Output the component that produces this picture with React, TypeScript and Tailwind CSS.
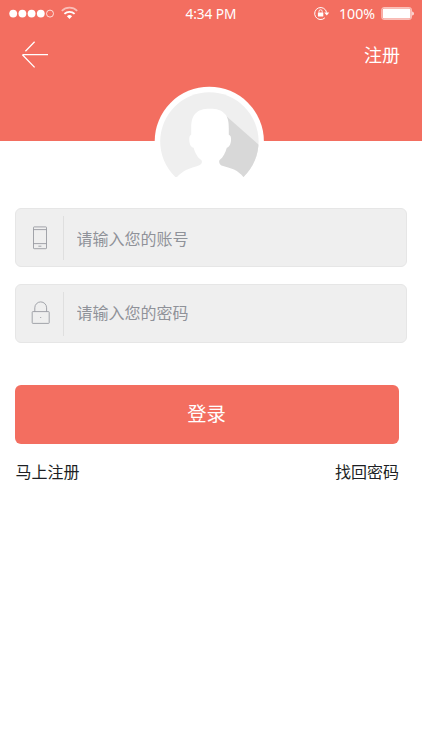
import type { ReactNode } from "react";

function StatusBar() {
	return (
		<div className="flex h-[27px] items-center text-white">
			<svg width="80" height="27" viewBox="0 0 80 27" fill="none">
				<g fill="#fff">
					<circle cx="13.2" cy="13.6" r="3.9" />
					<circle cx="22.4" cy="13.6" r="3.9" />
					<circle cx="31.6" cy="13.6" r="3.9" />
					<circle cx="40.8" cy="13.6" r="3.9" />
				</g>
				<circle cx="50" cy="13.6" r="3.5" stroke="#fff" strokeWidth="0.9" opacity="0.85" />
				<path d="M61.8 10.8a11 11 0 0 1 15.4 0" stroke="#fff" strokeWidth="1.7" opacity="0.55" />
				<path d="M64.4 13.9a7.2 7.2 0 0 1 10.2 0" stroke="#fff" strokeWidth="1.8" />
				<path d="M66.9 16.3a3.8 3.8 0 0 1 5.2 0L69.5 19z" fill="#fff" />
			</svg>
			<span className="ml-[105.5px] w-[51.5px] whitespace-nowrap text-[13.7px] leading-[27px] tracking-[-0.1px]">4:34 PM</span>
			<svg className="ml-[75px]" width="20" height="27" viewBox="312 0 20 27" fill="none">
				<path d="M324.9 17.8a6 6 0 1 1 1.7-5.2" stroke="#fff" strokeWidth="1" />
				<path d="M324.2 12.4h5L326.8 15.6z" fill="#fff" />
				<rect x="317.9" y="12.4" width="5.4" height="4.2" rx="0.4" fill="#fff" />
				<path d="M319 12.6v-1.2a1.6 1.6 0 0 1 3.2 0v1.2" stroke="#fff" strokeWidth="0.9" />
			</svg>
			<span className="ml-[7px] w-[36px] whitespace-nowrap text-[14.2px] leading-[27px]">100%</span>
			<svg className="ml-[6px]" width="34" height="27" viewBox="381 0 34 27" fill="none">
				<rect x="381.8" y="7.6" width="29.6" height="11.8" rx="2" stroke="#fff" strokeWidth="0.8" opacity="0.8" />
				<rect x="382.7" y="8.5" width="27.8" height="10" rx="1.2" fill="#fff" />
				<path d="M412.3 11.4c1.9.6 1.9 3.6 0 4.2z" fill="#fff" />
			</svg>
		</div>
	);
}

function Avatar() {
	return (
		<svg className="relative mx-auto -mt-[55px] -translate-x-[2px]" width="110" height="110" viewBox="0 0 110 110">
			<defs>
				<clipPath id="disc">
					<circle cx="55.4" cy="55.5" r="49.2" />
				</clipPath>
			</defs>
			<circle cx="55.3" cy="55.3" r="54.6" fill="#fff" />
			<g clipPath="url(#disc)">
				<rect width="110" height="110" fill="#efefef" />
				<path d="M73 30.7L110 63.3V110H56V32z" fill="#d8d8d8" />
			</g>
			<path
				d="M56 22.7C63 22.7 67.5 24 71 28C74.5 32 74.8 37 74.8 43V48.8C76.6 49.4 77.3 51 77 54.5C76.7 58.5 75 61.4 72.8 61.7C71.5 66.5 69.5 71 65.4 74.3C64.7 76.5 65.6 78.5 67.4 79.4C72 81 76.5 81.8 80 83.5C84 85.5 87 88 89.4 91H96V107H16V91H23C25.5 88.3 28.5 86 32 84C36 82 41 81.2 45.3 79.3C47.8 78.2 48.5 76 47.5 74.3C43 71 41 66.5 39.6 61.7C37 61.4 35.6 58.5 35.3 54.5C35 51 35.6 49.4 37.2 48.8V43C37.2 37 37.5 32 41 28C44.5 24 49 22.7 56 22.7z"
				fill="#fff"
			/>
		</svg>
	);
}

function Field({ icon, type, placeholder }: { icon: ReactNode; type: string; placeholder: string }) {
	return (
		<label className="flex h-[59px] items-center rounded-md border border-[#e6e6e6] bg-[#efefef]">
			<span className="flex h-[44px] w-[48px] shrink-0 items-center border-r border-[#dfdfdf]">{icon}</span>
			<input
				type={type}
				placeholder={placeholder}
				className={`ml-[12.5px] h-[44px] min-w-0 flex-1 bg-transparent text-[16px] text-[#8f9299] outline-none placeholder:text-[#8f9299] ${type === "password" ? "pb-px" : "pt-[2px]"}`}
			/>
		</label>
	);
}

const phoneIcon = (
	<svg className="shrink-0" width="47" height="44" viewBox="16 216 47 44" fill="none" stroke="#989ba2" strokeWidth="0.9">
		<rect x="33.5" y="226.9" width="13" height="21.8" rx="0.6" />
		<path d="M33.4 229.6h13M33.4 243.6h13M38.4 246.2h3" />
	</svg>
);

const lockIcon = (
	<svg className="shrink-0" width="47" height="44" viewBox="16 292 47 44" fill="none" stroke="#989ba2" strokeWidth="0.9">
		<rect x="32.2" y="311.6" width="17" height="11.8" rx="0.6" />
		<path d="M34.8 311.6v-3.8a5.9 5.9 0 0 1 11.8 0v3.8" />
		<circle cx="40.7" cy="317.5" r="0.6" fill="#989ba2" stroke="none" />
	</svg>
);

export default function App() {
	return (
		<div className="h-[750px] w-[422px] overflow-hidden bg-white font-['Noto_Sans','Noto_Sans_CJK_SC',sans-serif]">
			<header className="h-[141px] bg-[#f36e60]">
				<StatusBar />
				<nav className="flex h-[56px] items-center justify-between pl-[21px] pr-[22px] text-white">
					<button type="button" aria-label="返回">
						<svg width="28" height="28" viewBox="21 41 28 28" fill="none" stroke="#fff" strokeWidth="1.3">
							<path d="M48 54.7H22.4M34.6 41.8L25.4 51.3M22.4 54.7L34.6 67.4" />
						</svg>
					</button>
					<button type="button" className="text-[18px] leading-[28px]">注册</button>
				</nav>
			</header>
			<Avatar />
			<main className="pl-[15px]">
				<div className="mt-[12px] flex w-[392px] flex-col gap-[17px]">
					<Field icon={phoneIcon} type="text" placeholder="请输入您的账号" />
					<Field icon={lockIcon} type="password" placeholder="请输入您的密码" />
				</div>
				<button type="button" className="mt-[42px] block h-[59px] w-[384px] rounded-md bg-[#f36e60] pr-px text-[19.3px] text-white">
					登录
				</button>
				<div className="mt-[16px] flex w-[384px] justify-between pl-[0.5px] text-[16px] leading-[24px] text-[#1d1f24]">
					<a href="#register">马上注册</a>
					<a href="#reset">找回密码</a>
				</div>
			</main>
		</div>
	);
}
